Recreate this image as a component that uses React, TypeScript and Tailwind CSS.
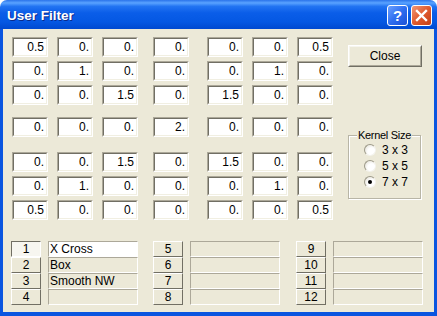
import { useState } from "react";

const rows = [
  ["0.5", "0.", "0.", "0.", "0.", "0.", "0.5"],
  ["0.", "1.", "0.", "0.", "0.", "1.", "0."],
  ["0.", "0.", "1.5", "0.", "1.5", "0.", "0."],
  ["0.", "0.", "0.", "2.", "0.", "0.", "0."],
  ["0.", "0.", "1.5", "0.", "1.5", "0.", "0."],
  ["0.", "1.", "0.", "0.", "0.", "1.", "0."],
  ["0.5", "0.", "0.", "0.", "0.", "0.", "0.5"],
];

const rowGaps = ["", "mt-[4px]", "mt-[4px]", "mt-[12px]", "mt-[15px]", "mt-[4px]", "mt-[4px]"];
const colGaps = ["", "ml-[9px]", "ml-[9px]", "ml-[15px]", "ml-[18px]", "ml-[9px]", "ml-[9px]"];

const slots = [
  [
    { n: "1", name: "X Cross" },
    { n: "2", name: "Box" },
    { n: "3", name: "Smooth NW" },
    { n: "4", name: "" },
  ],
  [
    { n: "5", name: "" },
    { n: "6", name: "" },
    { n: "7", name: "" },
    { n: "8", name: "" },
  ],
  [
    { n: "9", name: "" },
    { n: "10", name: "" },
    { n: "11", name: "" },
    { n: "12", name: "" },
  ],
];

const Cell = ({ value }: { value: string }) => (
  <div className="w-[36px] h-[20px] border border-t-[#aca899] border-l-[#aca899] border-b-white border-r-white">
    <div className="h-full border border-t-[#716f64] border-l-[#716f64] border-b-[#f1efe2] border-r-[#f1efe2] bg-white text-right pr-[2px] text-[12px] leading-[16px] text-black">
      {value}
    </div>
  </div>
);

const Radio = ({ label, checked }: { label: string; checked?: boolean }) => (
  <div className="flex items-center h-[16px]">
    <div className="w-[12px] h-[12px] rounded-full border border-t-[#9d9a8a] border-l-[#9d9a8a] border-b-[#f4f3ee] border-r-[#f4f3ee] bg-[radial-gradient(circle_at_65%_65%,#ffffff_40%,#dcd9cc_100%)] flex items-center justify-center">
      {checked && <div className="w-[4px] h-[4px] rounded-full bg-black" />}
    </div>
    <span className="ml-[6px] text-[12px] leading-none whitespace-nowrap">{label}</span>
  </div>
);

export default function App() {
  const [active, setActive] = useState("1");

  return (
    <div className="w-[437px] h-[316px] flex flex-col bg-white font-['Liberation_Sans',Arial,sans-serif] text-black select-none">
      {/* title bar */}
      <div className="h-[29px] rounded-t-[7px] bg-[linear-gradient(to_bottom,#2a73ea_0%,#5aa3ff_10%,#2274f2_22%,#0a5de8_45%,#0558e3_75%,#0049d0_100%)] flex items-center pl-[7px] pr-[5px]">
        <span className="text-[13.5px] font-bold text-white mt-[3px] [text-shadow:1px_1px_#0b2a8a]">User Filter</span>
        <div className="ml-auto flex gap-[3px] mt-[1px]">
          <div className="w-[21px] h-[21px] rounded-[3px] border border-white bg-[linear-gradient(135deg,#6aa0ff_0%,#2f6ef0_50%,#1b50d6_100%)] flex items-center justify-center text-white font-bold text-[15px] leading-none">
            ?
          </div>
          <div className="w-[21px] h-[21px] rounded-[3px] border border-white bg-[linear-gradient(135deg,#f09878_0%,#e05a2e_50%,#c43f17_100%)] flex items-center justify-center">
            <svg width="13" height="13" viewBox="0 0 13 13">
              <path d="M2 2 L11 11 M11 2 L2 11" stroke="white" strokeWidth="2.4" strokeLinecap="square" />
            </svg>
          </div>
        </div>
      </div>

      {/* body */}
      <div className="flex-1 border-l-[3px] border-r-[3px] border-b-[4px] border-[#0a55e0] bg-[#ece9d8] flex flex-col">
        <div className="flex pl-[9px] pt-[8px]">
          <div className="flex flex-col">
            {rows.map((row, r) => (
              <div key={r} className={`flex ${rowGaps[r]}`}>
                {row.map((v, c) => (
                  <div key={c} className={colGaps[c]}>
                    <Cell value={v} />
                  </div>
                ))}
              </div>
            ))}
          </div>

          <div className="ml-[15px] w-[74px] flex flex-col pt-[8px]">
            <div className="h-[22px] border border-t-white border-l-white border-b-[#716f64] border-r-[#716f64]">
              <div className="h-full border border-t-[#f6f5ef] border-l-[#f6f5ef] border-b-[#aca899] border-r-[#aca899] flex items-center justify-center text-[12px]">
                Close
              </div>
            </div>

            <div className="relative mt-[68px] h-[64px] w-[73px] border border-[#b8b5a6] shadow-[inset_1px_1px_0_#fff,1px_1px_0_#fff] pl-[15px] pt-[6px]">
              <span className="absolute -top-[7px] left-[8px] px-[1px] bg-[#ece9d8] text-[11px] leading-[12px] tracking-[-0.3px] whitespace-nowrap">
                Kernel Size
              </span>
              <Radio label="3 x 3" />
              <Radio label="5 x 5" />
              <Radio label="7 x 7" checked />
            </div>
          </div>
        </div>

        <div className="flex pl-[8px] mt-[21px]">
          {slots.map((group, g) => (
            <div key={g} className={`flex flex-col ${g === 1 ? "ml-[15px]" : g === 2 ? "ml-[16px]" : ""}`}>
              {group.map((s) => {
                const on = active === s.n;
                return (
                  <div key={s.n} className="flex h-[16px]">
                    <button
                      onClick={() => setActive(s.n)}
                      className={`w-[30px] h-[16px] border ${
                        on
                          ? "border-t-[#716f64] border-l-[#716f64] border-b-white border-r-white bg-[#f7f6f0]"
                          : "border-t-white border-l-white border-b-[#716f64] border-r-[#716f64] bg-[#ece9d8]"
                      } text-[12px] leading-[14px] text-center p-0`}
                    >
                      {s.n}
                    </button>
                    <div
                      className={`ml-[7px] w-[90px] h-[16px] border border-t-[#aca899] border-l-[#aca899] border-b-white border-r-white ${
                        s.n === "1" ? "bg-white" : "bg-[#ece9d8]"
                      } text-[12px] leading-[14px] pl-[1px]`}
                    >
                      {s.name}
                    </div>
                  </div>
                );
              })}
            </div>
          ))}
        </div>
      </div>
    </div>
  );
}
